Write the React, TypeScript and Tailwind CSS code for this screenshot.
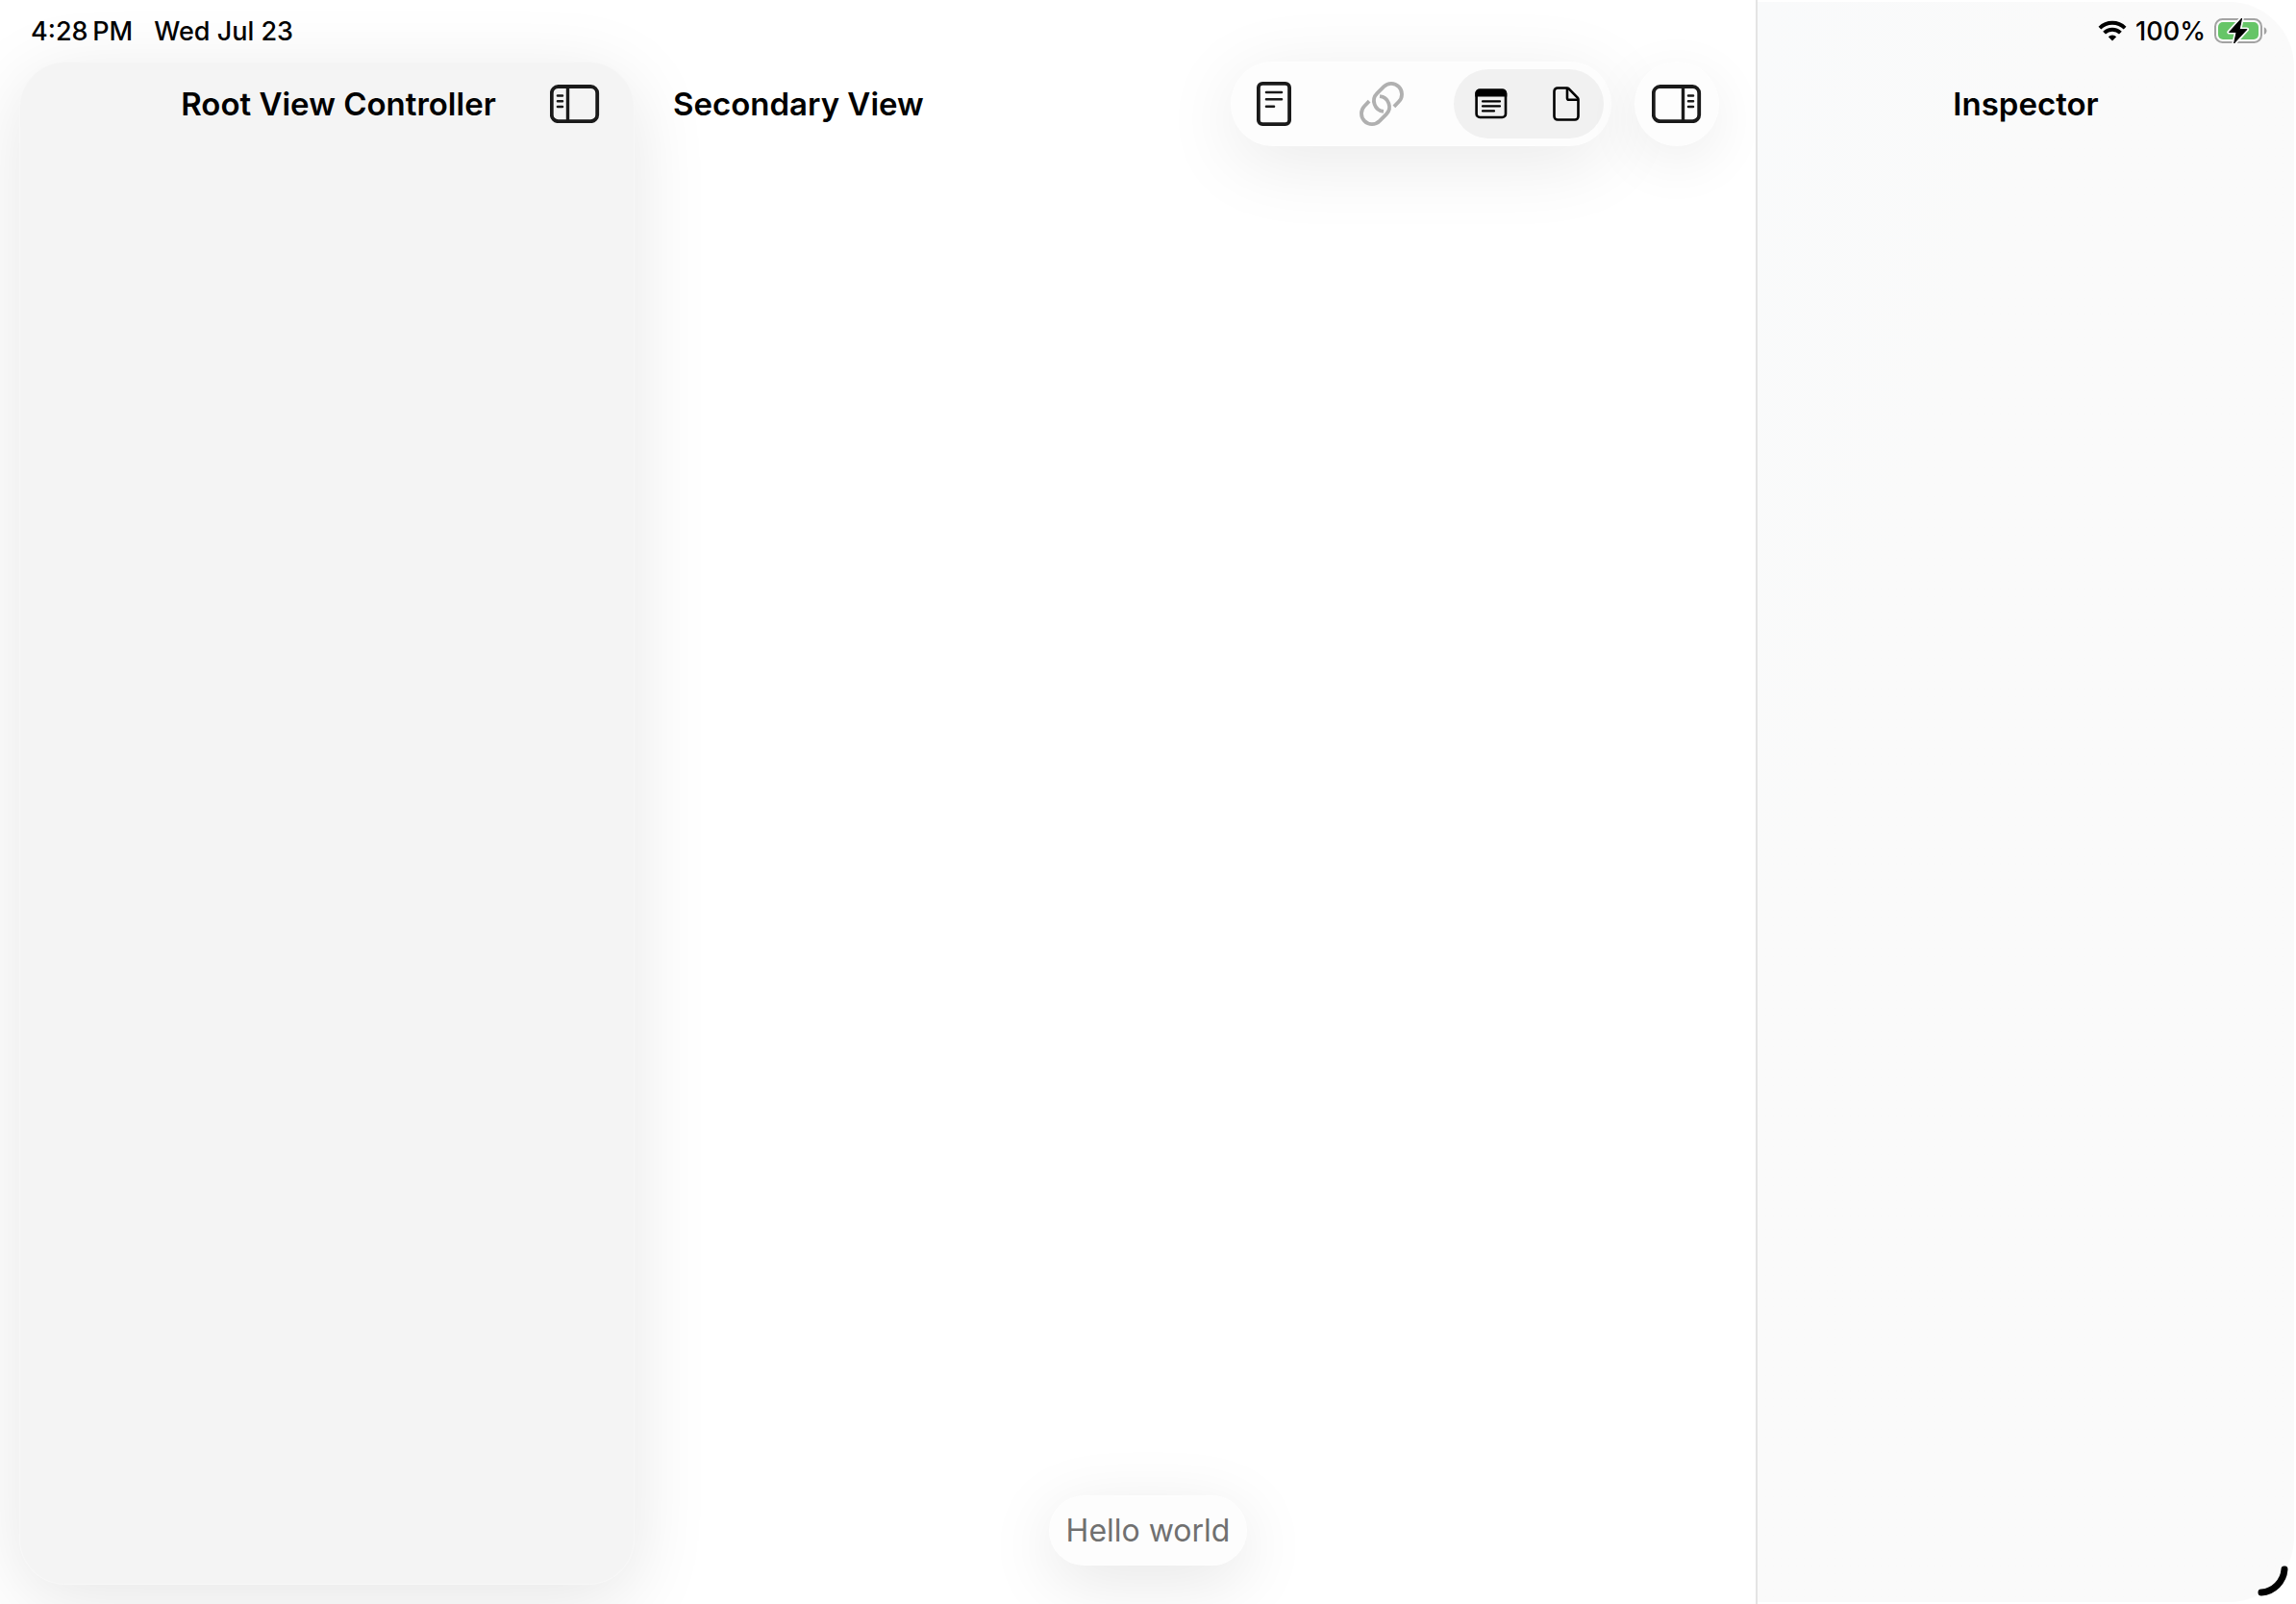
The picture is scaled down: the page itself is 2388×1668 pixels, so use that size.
import type { ReactNode } from 'react';

interface IconButtonProps {
  label: string;
  className?: string;
  disabled?: boolean;
  children: ReactNode;
}

function IconButton({ label, className = '', disabled, children }: IconButtonProps) {
  return (
    <button
      type="button"
      aria-label={label}
      disabled={disabled}
      className={`flex shrink-0 items-center justify-center ${className}`}
    >
      {children}
    </button>
  );
}

function SidebarIcon({ side }: { side: 'left' | 'right' }) {
  const divider = side === 'left' ? 18.5 : 32.5;
  const lines = side === 'left' ? 'M8 11.5h5M8 17.2h5M8 23h5' : 'M38 11.5h5M38 17.2h5M38 23h5';
  return (
    <svg width="52" height="40" viewBox="0 0 52 40" fill="none" stroke="#1a1a1a" strokeLinecap="round">
      <rect x="1.8" y="2" width="47.4" height="36.2" rx="6.8" strokeWidth="3.8" />
      <path d={`M${divider} 3v34`} strokeWidth="3.4" />
      <path d={lines} strokeWidth="2.6" />
    </svg>
  );
}

function NoteIcon() {
  return (
    <svg width="36" height="46" viewBox="0 0 36 46" fill="none" stroke="#1a1a1a" strokeLinecap="round">
      <rect x="1.9" y="1.9" width="32.2" height="42.2" rx="4.2" strokeWidth="3.8" />
      <path d="M10 11h16M10 18.3h16M10 25.7h8" strokeWidth="2.6" />
    </svg>
  );
}

function LinkIcon() {
  return (
    <svg width="48" height="48" viewBox="-24 -24 48 48" fill="none" stroke="#b0b0b0" strokeWidth="3.8">
      <path d="M12.9 2.9L17.8-2.2A11 11 0 0 0 2.2-17.8L-4.8-10.8A11 11 0 0 0 2 7.9" />
      <path d="M-12.9-2.9L-17.8 2.2A11 11 0 0 0-2.2 17.8L4.8 10.8A11 11 0 0 0-2-7.9" />
    </svg>
  );
}

function WindowIcon() {
  return (
    <svg width="34" height="32" viewBox="0 0 34 32" fill="none" stroke="#000" strokeLinecap="round">
      <rect x="1.6" y="1.8" width="30.4" height="28.2" rx="3.6" strokeWidth="2.6" />
      <path d="M.3 8.5V5A4.5 4.5 0 0 1 4.8.5h24A4.5 4.5 0 0 1 33.3 5v3.5z" fill="#000" stroke="none" />
      <path d="M8 13.4h18M8 18.4h18M8 23.4h12" strokeWidth="2.2" />
    </svg>
  );
}

function PageIcon() {
  return (
    <svg width="28" height="36" viewBox="0 0 28 36" fill="none" stroke="#000" strokeWidth="2.6" strokeLinejoin="round">
      <path d="M5 1.5h9.8a2.4 2.4 0 0 1 1.7.7l9.3 9.4a2.4 2.4 0 0 1 .7 1.7V31a3.5 3.5 0 0 1-3.5 3.5H5A3.5 3.5 0 0 1 1.5 31V5A3.5 3.5 0 0 1 5 1.5z" />
      <path d="M15 2v10a1.8 1.8 0 0 0 1.8 1.8H26" />
    </svg>
  );
}

function WifiIcon() {
  return (
    <svg width="30" height="22" viewBox="0 0 30 22" fill="none" stroke="#000" strokeWidth="3.9">
      <path d="M1.9 8.1a18.6 18.6 0 0 1 26.2 0" />
      <path d="M6.6 13.2a11.8 11.8 0 0 1 16.8 0" />
      <path d="M15 21.4l-4.2-4.2a6 6 0 0 1 8.4 0z" fill="#000" stroke="none" />
    </svg>
  );
}

function BatteryIcon() {
  const bolt = 'M28.6 1L15.5 15.4h7.6L20.6 27 33.9 12.6h-7.7z';
  return (
    <svg width="56" height="28" viewBox="0 0 56 28" fill="none">
      <rect x="1" y="2" width="48" height="24" rx="7.5" stroke="#a3a3a3" strokeWidth="2" />
      <path d="M51.8 10.2c3.6 1.3 3.6 6.4 0 7.7z" fill="#a3a3a3" />
      <rect x="4" y="5" width="42" height="18" rx="5" fill="#66c567" />
      <path d={bolt} fill="#fafafa" stroke="#fafafa" strokeWidth="4.4" strokeLinejoin="round" />
      <path d={bolt} fill="#000" stroke="#000" strokeWidth="1" strokeLinejoin="round" />
    </svg>
  );
}

function StatusBar() {
  return (
    <div className="absolute inset-x-0 top-0 z-10 flex h-16 items-center justify-between pr-[29px] pl-8 text-[27px] leading-none font-medium">
      <div className="flex gap-[22px]">
        <time>4:28{'\u2009'}PM</time>
        <span>Wed Jul 23</span>
      </div>
      <div className="flex items-center gap-[9px]">
        <WifiIcon />
        <span>100%</span>
        <BatteryIcon />
      </div>
    </div>
  );
}

function Sidebar() {
  return (
    <aside className="flex w-[680px] shrink-0 flex-col px-5 pt-16 pb-5">
      <div className="flex-1 rounded-[48px] bg-[#f4f4f4] shadow-[0_16px_80px_rgba(0,0,0,0.1),inset_0_0_2px_#fff]">
        <header className="flex h-22 items-center pr-[18px] pb-px pl-[130px]">
          <h1 className="flex-1 text-center whitespace-nowrap">Root View Controller</h1>
          <IconButton label="Toggle sidebar" className="h-22 w-22">
            <SidebarIcon side="left" />
          </IconButton>
        </header>
      </div>
    </aside>
  );
}

function Secondary() {
  return (
    <main className="min-w-0 flex-1 pt-16 pr-[38px] pl-5">
      <header className="flex h-22 items-center justify-between">
        <h2 className="whitespace-nowrap">Secondary View</h2>
        <div className="flex gap-6">
          <div className="flex items-center gap-[22px] rounded-full bg-[#fdfdfd] pr-2 shadow-[0_16px_80px_rgba(0,0,0,0.09),inset_0_0_3px_#fff]">
            <IconButton label="Note" className="h-22 w-[90px]">
              <NoteIcon />
            </IconButton>
            <IconButton label="Link" className="h-22 w-[90px]" disabled>
              <LinkIcon />
            </IconButton>
            <div className="ml-2 flex rounded-full bg-[#f1f1f1]">
              <IconButton label="Window" className="h-18 w-[78px]">
                <WindowIcon />
              </IconButton>
              <IconButton label="Document" className="h-18 w-[78px]">
                <PageIcon />
              </IconButton>
            </div>
          </div>
          <IconButton
            label="Toggle inspector"
            className="h-22 w-22 rounded-full bg-[#fdfdfd] shadow-[0_16px_60px_rgba(0,0,0,0.07),inset_0_0_3px_#fff]"
          >
            <SidebarIcon side="right" />
          </IconButton>
        </div>
      </header>
    </main>
  );
}

function Inspector() {
  return (
    <aside className="relative flex w-[562px] shrink-0 border-l-2 border-[#e4e4e4] bg-white py-0.5 pr-0.5">
      <div className="flex-1 rounded-r-[68px] bg-[#fafafa] bg-linear-to-br from-[#f9fafb] to-[#fafafa] to-30% pt-[62px]">
        <header className="flex h-22 items-center justify-center">
          <h2>Inspector</h2>
        </header>
      </div>
    </aside>
  );
}

export default function App() {
  return (
    <div className="relative flex min-h-screen overflow-hidden bg-white font-['Inter',sans-serif] text-[33px] leading-10 font-semibold text-black">
      <StatusBar />
      <Sidebar />
      <Secondary />
      <Inspector />
      <div className="pointer-events-none absolute inset-x-0 bottom-10 flex justify-center">
        <p
          role="status"
          className="flex h-[73px] items-center rounded-full bg-[#fdfdfd] px-[18px] text-[32px] font-normal text-[#707070] shadow-[0_16px_70px_rgba(0,0,0,0.1),inset_0_0_3px_#fff]"
        >
          Hello world
        </p>
      </div>
      {/* window resize handle */}
      <svg
        className="absolute right-2 bottom-2"
        width="32"
        height="32"
        viewBox="0 0 32 32"
        fill="none"
        stroke="#000"
        strokeWidth="7"
        strokeLinecap="round"
      >
        <path d="M28 4A26 26 0 0 1 4 28" />
      </svg>
    </div>
  );
}
